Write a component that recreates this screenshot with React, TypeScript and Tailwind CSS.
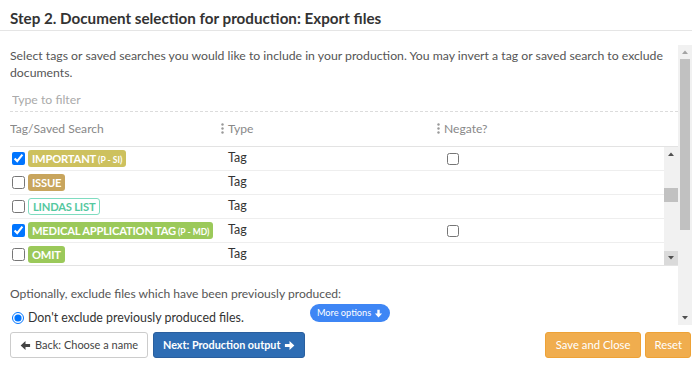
type TagRow = {
  name: string;
  suffix?: string;
  color: string;
  outline?: boolean;
  checked?: boolean;
  negate?: boolean;
};

const rows: TagRow[] = [
  { name: "IMPORTANT", suffix: "(P - SI)", color: "bg-[#cdc15e]", checked: true, negate: true },
  { name: "ISSUE", color: "bg-[#c8a55d]" },
  { name: "LINDAS LIST", color: "", outline: true },
  { name: "MEDICAL APPLICATION TAG", suffix: "(P - MD)", color: "bg-[#9bc95a]", checked: true, negate: true },
  { name: "OMIT", color: "bg-[#9bc95a]" },
];

const Arrow = ({ className = "", dir = "right" }: { className?: string; dir?: "right" | "left" | "down" }) => {
  const rot = dir === "left" ? "rotate(180 6 6)" : dir === "down" ? "rotate(90 6 6)" : undefined;
  return (
    <svg viewBox="0 0 12 12" className={className} fill="currentColor">
      <path transform={rot} d="M1 4.4h5V1.2l5.3 4.8L6 10.8V7.6H1z" />
    </svg>
  );
};

const Tri = ({ up, color }: { up?: boolean; color: string }) => (
  <svg viewBox="0 0 6 4" className="w-[6px] h-[4px]" fill={color}>
    <path d={up ? "M0 4L3 0.5L6 4z" : "M0 0L6 0L3 3.5z"} />
  </svg>
);

// drawn scrollbar: the headless browser hides native ones
const Scrollbar = ({
  thumbTop,
  thumbHeight,
  thumbClass,
  upColor,
  downClass = "",
}: {
  thumbTop: number;
  thumbHeight: number;
  thumbClass: string;
  upColor: string;
  downClass?: string;
}) => (
  <div className="w-[14px] shrink-0 flex flex-col bg-[#f1f1f1]">
    <div className="h-[14px] flex items-center justify-center">
      <Tri up color={upColor} />
    </div>
    <div className="flex-1 flex flex-col">
      <div style={{ marginTop: thumbTop, height: thumbHeight }} className={`bg-[#c1c1c1] ${thumbClass}`} />
    </div>
    <div className={`h-[14px] flex items-center justify-center ${downClass}`}>
      <Tri color="#505050" />
    </div>
  </div>
);

const Grip = () => (
  <svg viewBox="0 0 3 11" className="w-[3px] h-[11px] mr-[4px]" fill="#999">
    <circle cx="1.5" cy="1.5" r="1.2" />
    <circle cx="1.5" cy="5.5" r="1.2" />
    <circle cx="1.5" cy="9.5" r="1.2" />
  </svg>
);

const TagBadge = ({ row }: { row: TagRow }) => (
  <span
    className={`inline-flex items-baseline whitespace-nowrap h-[17px] px-[4px] rounded-[3px] font-bold text-[11.2px] tracking-[-0.2px] ${
      row.outline ? "border border-[#7fdcc0] text-[#55c8a0] leading-[15px]" : `${row.color} text-white leading-[17px]`
    }`}
  >
    {row.name}
    {row.suffix && <span className="text-[8.5px] ml-[2px] tracking-normal">{row.suffix}</span>}
  </span>
);

export default function App() {
  return (
    <div className="w-[700px] h-[367px] flex flex-col bg-white font-['Lato',sans-serif] text-[#555]">
      {/* Title */}
      <div className="pl-[10px] mr-[8px] pt-[8px] pb-[2px] border-b border-[#e5e5e5]">
        <h2 className="text-[15.2px] leading-[20px] font-bold text-[#333]">
          Step 2. Document selection for production: Export files
        </h2>
      </div>

      {/* Scrollable body */}
      <div className="ml-[10px] mr-[8px] mt-[14px] h-[280px] flex">
        <div className="flex-1 overflow-hidden">
          <p className="pt-[2px] text-[12.25px] leading-[17px] pr-[4px]">
            Select tags or saved searches you would like to include in your production. You may invert a tag or saved
            search to exclude documents.
          </p>

          <div className="mt-[7px] h-[24px] pt-[2px] border-b border-dashed border-[#dcdcdc] flex items-center">
            <input
              placeholder="Type to filter"
              className="w-full pl-[2px] text-[12.25px] outline-none placeholder:text-[#aaa] bg-transparent"
            />
          </div>

          {/* Table header */}
          <div className="grid grid-cols-[210px_216px_1fr] h-[35px] items-center border-b border-[#e3e3e3] text-[12.1px] text-[#888]">
            <div>Tag/Saved Search</div>
            <div className="flex items-center pl-[1px]">
              <Grip />
              Type
            </div>
            <div className="flex items-center pl-[1px]">
              <Grip />
              Negate?
            </div>
          </div>

          {/* Table body */}
          <div className="h-[119px] flex border-b border-[#e3e3e3]">
            <div className="flex-1 overflow-hidden">
              {rows.map((row) => (
                <div
                  key={row.name}
                  className="grid grid-cols-[210px_216px_1fr] h-[24px] items-center border-b border-[#eeeeee] text-[12.5px] text-[#333]"
                >
                  <div className="flex items-center">
                    <input
                      type="checkbox"
                      defaultChecked={row.checked}
                      className="w-[13px] h-[13px] ml-[2px] mr-[3px]"
                    />
                    <TagBadge row={row} />
                  </div>
                  <div className="pl-[8px]">Tag</div>
                  <div className="pl-[11px] flex items-center">
                    {row.negate && <input type="checkbox" className="w-[12px] h-[12px]" />}
                  </div>
                </div>
              ))}
            </div>
            <Scrollbar thumbTop={27} thumbHeight={14} thumbClass="" upColor="#505050" downClass="bg-[#dadada]" />
          </div>

          <p className="mt-[19px] text-[12.1px] leading-[17px]">
            Optionally, exclude files which have been previously produced:
          </p>

          <div className="grid grid-cols-[1fr_auto_1fr] items-start mt-[2px]">
            <label className="flex items-center pt-[7px] text-[12.4px] leading-[14px] text-[#333] whitespace-nowrap">
              <input type="radio" name="excl" defaultChecked className="w-[12px] h-[12px] ml-[2px] mr-[4px]" />
              Don't exclude previously produced files.
            </label>
            <button className="ml-[12px] flex items-center gap-[3px] h-[18px] px-[7px] rounded-full bg-[#3e86f5] text-white text-[9.2px]">
              More options
              <Arrow dir="down" className="w-[9px] h-[9px]" />
            </button>
            <div />
          </div>
        </div>
        <Scrollbar thumbTop={0} thumbHeight={171} thumbClass="mx-[2px]" upColor="#a3a3a3" />
      </div>

      {/* Footer buttons */}
      <div className="flex items-center justify-between pl-[10px] pr-[9px] mt-[7px]">
        <div className="flex gap-[5px]">
          <button className="flex items-center gap-[4px] h-[26px] px-[9px] rounded-[3px] border border-[#ccc] bg-white text-[11px] text-[#444]">
            <Arrow dir="left" className="w-[11px] h-[11px]" />
            Back: Choose a name
          </button>
          <button className="flex items-center gap-[4px] h-[26px] px-[9px] rounded-[3px] border border-[#2a5f9e] bg-[#2e6db4] text-[10.8px] font-bold text-white">
            Next: Production output
            <Arrow className="w-[11px] h-[11px]" />
          </button>
        </div>
        <div className="flex gap-[4px]">
          <button className="h-[26px] px-[10px] rounded-[3px] border border-[#eea236] bg-[#f0ad4e] text-[11.3px] text-white">
            Save and Close
          </button>
          <button className="h-[26px] px-[8px] rounded-[3px] border border-[#eea236] bg-[#f0ad4e] text-[11.3px] text-white">
            Reset
          </button>
        </div>
      </div>
    </div>
  );
}
